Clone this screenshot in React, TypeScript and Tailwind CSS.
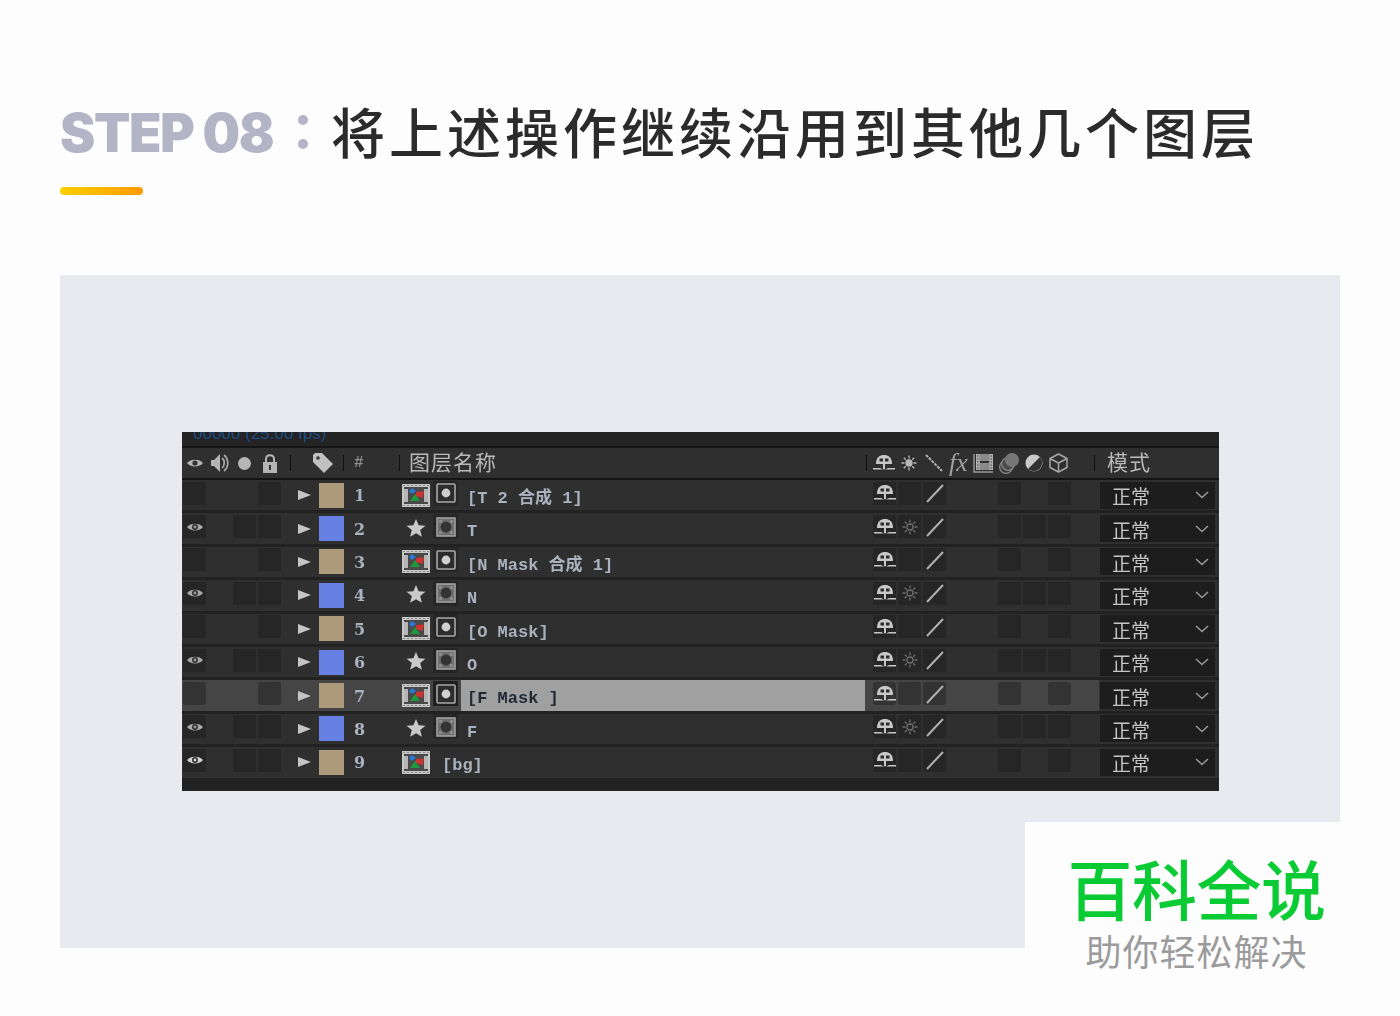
const sans = 'font-["Noto_Sans_CJK_SC","Noto_Sans",sans-serif]';
const mono = 'font-["Liberation_Mono","Noto_Sans_CJK_SC",monospace]';

type Row = {
  num: number;
  kind: 'comp' | 'shape' | 'footage';
  name: string;
  eye: boolean;
  selected?: boolean;
};

const rows: Row[] = [
  { num: 1, kind: 'comp', name: '[T 2 合成 1]', eye: false },
  { num: 2, kind: 'shape', name: 'T', eye: true },
  { num: 3, kind: 'comp', name: '[N Mask 合成 1]', eye: false },
  { num: 4, kind: 'shape', name: 'N', eye: true },
  { num: 5, kind: 'comp', name: '[O Mask]', eye: false },
  { num: 6, kind: 'shape', name: 'O', eye: true },
  { num: 7, kind: 'comp', name: '[F Mask ]', eye: false, selected: true },
  { num: 8, kind: 'shape', name: 'F', eye: true },
  { num: 9, kind: 'footage', name: '[bg]', eye: true },
];

function Eye({ dim }: { dim?: boolean }) {
  return (
    <svg width="18" height="12" viewBox="0 0 18 12">
      <path d="M1 6C4 1.5 14 1.5 17 6C14 10.5 4 10.5 1 6Z" fill={dim ? '#a8a8a8' : '#d0d0d0'} />
      <circle cx="9" cy="6" r="3" fill="#333" />
      <circle cx="9" cy="6" r="1.4" fill={dim ? '#999' : '#d0d0d0'} />
    </svg>
  );
}

function Shy() {
  return (
    <svg width="22" height="20" viewBox="0 0 22 20">
      <path d="M3 11C3 4 7 2 11 2S19 4 19 11Z" fill="#c8c8c8" />
      <rect x="6.5" y="5.5" width="3.5" height="3" fill="#2a2a2a" />
      <rect x="12" y="5.5" width="3.5" height="3" fill="#2a2a2a" />
      <rect x="10" y="11" width="2" height="5" fill="#c8c8c8" />
      <path d="M0 15H7L11 17L15 15H22V16.5H0Z" fill="#c8c8c8" />
    </svg>
  );
}

function Sun({ dim }: { dim?: boolean }) {
  const c = dim ? '#6f6f6f' : '#b8b8b8';
  return (
    <svg width="16" height="16" viewBox="0 0 16 16" fill="none" stroke={c} strokeWidth="1.3">
      <circle cx="8" cy="8" r="3" fill={dim ? 'none' : c} />
      <path d="M8 0.5V3.5M8 12.5V15.5M0.5 8H3.5M12.5 8H15.5M2.8 2.8L4.8 4.8M11.2 11.2L13.2 13.2M13.2 2.8L11.2 4.8M4.8 11.2L2.8 13.2" />
    </svg>
  );
}

function Slash() {
  return (
    <svg width="20" height="20" viewBox="0 0 20 20">
      <path d="M2 19L18 2" stroke="#b0b0b0" strokeWidth="2" />
    </svg>
  );
}

function CompIcon() {
  return (
    <svg width="28" height="23" viewBox="0 0 28 23">
      <rect width="28" height="23" fill="#c6c6c6" />
      <rect x="2" y="3" width="24" height="17" fill="#4a4a4a" />
      <path d="M1 1.5H3M5 1.5H7M9 1.5H11M13 1.5H15M17 1.5H19M21 1.5H23M25 1.5H27M1 21.5H3M5 21.5H7M9 21.5H11M13 21.5H15M17 21.5H19M21 21.5H23M25 21.5H27" stroke="#8a8a8a" strokeWidth="1" />
      <path d="M2 5H6V18H2ZM22 5H26V18H22Z" fill="#b5b5b5" />
      <path d="M10 4L14 7L10 10L7 7Z" fill="#2b78d8" />
      <path d="M14 8L22 7.5L20.5 14L14 12Z" fill="#d0332f" />
      <path d="M13 10L18 17H8Z" fill="#1f9a3a" />
    </svg>
  );
}

function Star() {
  return (
    <svg className="-mt-[2px]" width="20" height="20" viewBox="0 0 20 20">
      <path d="M10 1L12.6 7.2L19.4 7.7L14.2 12.1L15.9 18.8L10 15.2L4.1 18.8L5.8 12.1L0.6 7.7L7.4 7.2Z" fill="#c9c9c9" />
    </svg>
  );
}

function MaskBox() {
  return (
    <svg width="20" height="20" viewBox="0 0 20 20">
      <rect x="1" y="1" width="18" height="18" rx="1" fill="#2c2c2c" stroke="#a8a8a8" strokeWidth="1.6" />
      <circle cx="10" cy="10" r="4.4" fill="#cfcfcf" />
    </svg>
  );
}

function ShapeBox() {
  return (
    <svg width="20" height="20" viewBox="0 0 20 20">
      <rect x="1" y="1" width="18" height="18" fill="#6e6e6e" stroke="#a0a0a0" strokeWidth="1.6" />
      <circle cx="10" cy="10" r="5.4" fill="#333" />
      <path d="M3 3H6V6H3ZM14 3H17V6H14ZM3 14H6V17H3ZM14 14H17V17H14Z" fill="#8a8a8a" />
    </svg>
  );
}

function Slot({ children, className = '' }: { children?: React.ReactNode; className?: string }) {
  return <div className={`-mt-[4px] flex h-[23px] w-[23px] shrink-0 items-center justify-center ${className}`}>{children}</div>;
}

function Sep() {
  return <div className="h-[16px] w-px shrink-0 bg-[#111]" />;
}

function HeaderBar() {
  return (
    <div className="flex h-[34px] shrink-0 items-center border-t-2 border-b-2 border-t-[#161616] border-b-[#141414] bg-[#2f2f2f] text-[#b9b9b9]">
      <div className="flex w-[108px] shrink-0 items-center pl-[4px]">
        <svg width="18" height="12" viewBox="0 0 18 12">
          <path d="M1 6C4 1.5 14 1.5 17 6C14 10.5 4 10.5 1 6Z" fill="#b5b5b5" />
          <circle cx="9" cy="6" r="2.6" fill="#333" />
        </svg>
        <svg className="ml-[6px]" width="20" height="20" viewBox="0 0 20 20">
          <path d="M1 7H4L10 1V19L4 13H1Z" fill="#b5b5b5" />
          <path d="M12 5C15 7 15 13 12 15M14 2C19 6 19 14 14 18" fill="none" stroke="#a8a8a8" strokeWidth="1.7" />
        </svg>
        <div className="ml-[8px] h-[13px] w-[13px] shrink-0 rounded-full bg-[#b5b5b5]" />
        <svg className="ml-[11px]" width="16" height="20" viewBox="0 0 16 20">
          <path d="M4 9V6C4 1 12 1 12 6V9" fill="none" stroke="#b5b5b5" strokeWidth="2" />
          <rect x="1" y="9" width="14" height="11" fill="#b5b5b5" />
          <rect x="7" y="12" width="2" height="5" fill="#333" />
        </svg>
      </div>
      <Sep />
      <div className="flex w-[52px] shrink-0 pl-[21px]">
        <svg width="22" height="22" viewBox="0 0 22 22">
          <path d="M1 3L3 1H10L21 12L12 21L1 10Z" fill="#c0c0c0" />
          <circle cx="6" cy="6" r="1.8" fill="#333" />
        </svg>
      </div>
      <Sep />
      <span className={`w-[55px] shrink-0 pl-[10px] text-[16px] font-bold text-[#8c8c8c] ${mono}`}>#</span>
      <Sep />
      <span className={`-mt-[4px] w-[466px] shrink-0 pl-[9px] text-[21px] leading-none tracking-[1px] ${sans}`}>图层名称</span>
      <Sep />
      <div className="flex w-[227px] shrink-0 items-center pl-[6px]">
        <Shy />
        <div className="ml-[6px]"><Sun /></div>
        <svg className="ml-[8px]" width="18" height="18" viewBox="0 0 18 18">
          <path d="M1 1L17 17" stroke="#b0b0b0" strokeWidth="2" strokeDasharray="3 1" />
        </svg>
        <span className="ml-[6px] w-[23px] font-['Liberation_Serif',serif] text-[26px] leading-none italic text-[#a0a0a0]">fx</span>
        <svg className="ml-[1px]" width="21" height="20" viewBox="0 0 21 20">
          <path d="M1 1V19H20" fill="none" stroke="#999" strokeWidth="1.4" />
          <rect x="3" y="1" width="17" height="16" fill="#b0b0b0" />
          <rect x="6.5" y="1" width="10" height="16" fill="#8a8a8a" />
          <rect x="7" y="8" width="9" height="2" fill="#333" />
          <path d="M4 3H5.5M4 6H5.5M4 9H5.5M4 12H5.5M4 15H5.5M17.5 3H19M17.5 6H19M17.5 9H19M17.5 12H19M17.5 15H19" stroke="#444" strokeWidth="1" />
        </svg>
        <svg className="ml-[4px]" width="22" height="22" viewBox="0 0 22 22">
          <circle cx="8" cy="15" r="6.4" fill="#3b3b3b" stroke="#8a8a8a" strokeWidth="1.2" />
          <circle cx="10" cy="12" r="6.4" fill="#4a4a4a" stroke="#8a8a8a" strokeWidth="1.2" />
          <circle cx="14" cy="8" r="7" fill="#777" />
        </svg>
        <svg className="ml-[5px]" width="18" height="18" viewBox="0 0 18 18">
          <circle cx="9" cy="9" r="8.5" fill="#c9c9c9" />
          <path d="M15 3A8.5 8.5 0 0 1 3 15Z" fill="#333" />
        </svg>
        <svg className="ml-[6px]" width="19" height="20" viewBox="0 0 19 20" fill="none" stroke="#a8a8a8" strokeWidth="1.5" strokeLinejoin="round">
          <path d="M9.5 1L18 5.5V14.5L9.5 19L1 14.5V5.5Z" />
          <path d="M1 5.5L9.5 10L18 5.5M9.5 10V19" />
        </svg>
      </div>
      <Sep />
      <span className={`-mt-[4px] pl-[12px] text-[21px] leading-none tracking-[1px] ${sans}`}>模式</span>
    </div>
  );
}

function LayerRow({ row }: { row: Row }) {
  const sel = !!row.selected;
  const slot = sel ? 'rounded-[3px] bg-[#333333]' : 'bg-[#262626]';
  const isShape = row.kind === 'shape';
  return (
    <div className="flex h-[33.4px] shrink-0 items-center border-b-[3px] border-[#222222] bg-[#2f2f2f]">
      <div className={`flex h-full w-[683px] shrink-0 items-center pl-px ${sel ? 'bg-[#454545]' : ''}`}>
        <Slot className={slot}>{row.eye && <Eye dim={isShape} />}</Slot>
        <div className="w-[27px] shrink-0" />
        {row.eye ? <Slot className={slot} /> : <div className="w-[23px] shrink-0" />}
        <div className="w-[2px] shrink-0" />
        <Slot className={slot} />
        <div className="ml-[17px] h-0 w-0 shrink-0 border-y-[5px] border-l-[13px] border-y-transparent border-l-[#c4c4c4]" />
        <div className={`ml-[8px] h-[25px] w-[25px] shrink-0 ${isShape ? 'bg-[#6680e4]' : 'bg-[#ad9a7a]'}`} />
        <span className="ml-[10px] w-[46px] shrink-0 pt-[2px] font-['DejaVu_Serif',serif] text-[16px] font-bold text-[#a9b2bd]">{row.num}</span>
        <div className="flex w-[31px] shrink-0 justify-center">{isShape ? <Star /> : <CompIcon />}</div>
        {row.kind === 'footage' ? (
          <span className={`ml-[11px] pt-[7px] text-[17px] font-bold text-[#a9b2bd] ${mono}`}>{row.name}</span>
        ) : (
          <>
            <Slot className={`ml-[2px] !h-[25px] !w-[25px] ${sel ? 'bg-[#1f1f1f]' : 'bg-[#262626]'}`}>
              {isShape ? <ShapeBox /> : <MaskBox />}
            </Slot>
            <div className={`ml-[3px] flex h-full flex-1 items-center pl-[6px] ${sel ? 'bg-[#a0a0a0]' : ''}`}>
              <span className={`pt-[7px] text-[17px] font-bold whitespace-pre ${mono} ${sel ? 'text-[#222a33]' : 'text-[#a9b2bd]'}`}>
                {row.name}
              </span>
            </div>
          </>
        )}
      </div>
      <div className={`flex h-full w-[234px] shrink-0 items-center pl-[8px] ${sel ? 'bg-[#454545]' : ''}`}>
        <Slot className={slot}><Shy /></Slot>
        <Slot className={`ml-[2px] ${slot}`}>{isShape && <Sun dim />}</Slot>
        <Slot className={`ml-[2px] ${slot}`}><Slash /></Slot>
        <Slot className={`ml-[52px] ${slot}`} />
        {isShape ? <Slot className={`ml-[2px] ${slot}`} /> : <div className="ml-[2px] w-[23px] shrink-0" />}
        <Slot className={`ml-[2px] ${slot}`} />
      </div>
      <div className="ml-px flex h-[27px] w-[115px] shrink-0 items-center justify-between bg-[#1d1d1d] pr-[6px] pl-[12px]">
        <span className={`pt-[1px] text-[19px] leading-none text-[#c4c4c4] ${sans}`}>正常</span>
        <svg width="14" height="8" viewBox="0 0 14 8" fill="none" stroke="#9a9a9a" strokeWidth="1.5">
          <path d="M1 1L7 6.5L13 1" />
        </svg>
      </div>
    </div>
  );
}

export default function App() {
  return (
    <div className="relative h-[1016px] w-[1400px] overflow-hidden bg-[#fdfdfe] px-[60px] pt-[96px]">
      <div className="flex h-[74px] items-center">
        <span className="w-[222px] shrink-0 font-['Inter',sans-serif] text-[53px] leading-none font-black tracking-[-1.4px] text-[#b3b4c6]">
          STEP 08
        </span>
        <span className="-mt-[3px] flex h-[34px] w-[42px] shrink-0 flex-col items-center justify-between">
          <span className="h-[10px] w-[10px] rounded-full bg-[#b3b4c6]" />
          <span className="h-[10px] w-[10px] rounded-full bg-[#b3b4c6]" />
        </span>
        <h1 className={`-mt-[4px] ml-[7px] text-[54px] leading-none font-medium tracking-[4px] text-[#2b2b2b] ${sans}`}>
          将上述操作继续沿用到其他几个图层
        </h1>
      </div>
      <div className="mt-[17px] h-[8px] w-[83px] rounded-full bg-gradient-to-r from-[#ffd000] to-[#ff9a00]" />
      <div className="mt-[80px] h-[673px] w-[1280px] bg-[#e9eaf0] pt-[157px] pl-[122px]">
        <div className="flex h-[359px] w-[1037px] flex-col overflow-hidden bg-[#222222] blur-[0.4px]">
          <div className="h-[14px] shrink-0 overflow-hidden bg-[#242424]">
            <div className="-mt-[8px] pl-[11px] font-['Liberation_Sans',sans-serif] text-[17px] leading-[20px] text-[#1d4e86]">00000 (25.00 fps)</div>
          </div>
          <HeaderBar />
          {rows.map((row) => (
            <LayerRow key={row.num} row={row} />
          ))}
        </div>
      </div>
      <div className="absolute top-[822px] left-[1025px] flex h-[194px] w-[315px] flex-col items-center bg-[#fdfdfe] pt-[33px] pl-[28px]">
        <div className={`text-[65px] leading-none font-medium tracking-[-0.5px] whitespace-nowrap text-[#0bcb35] ${sans}`}>百科全说</div>
        <div className={`mt-[12px] text-[36px] leading-none tracking-[1px] whitespace-nowrap text-[#9b9b9b] ${sans}`}>助你轻松解决</div>
      </div>
    </div>
  );
}
